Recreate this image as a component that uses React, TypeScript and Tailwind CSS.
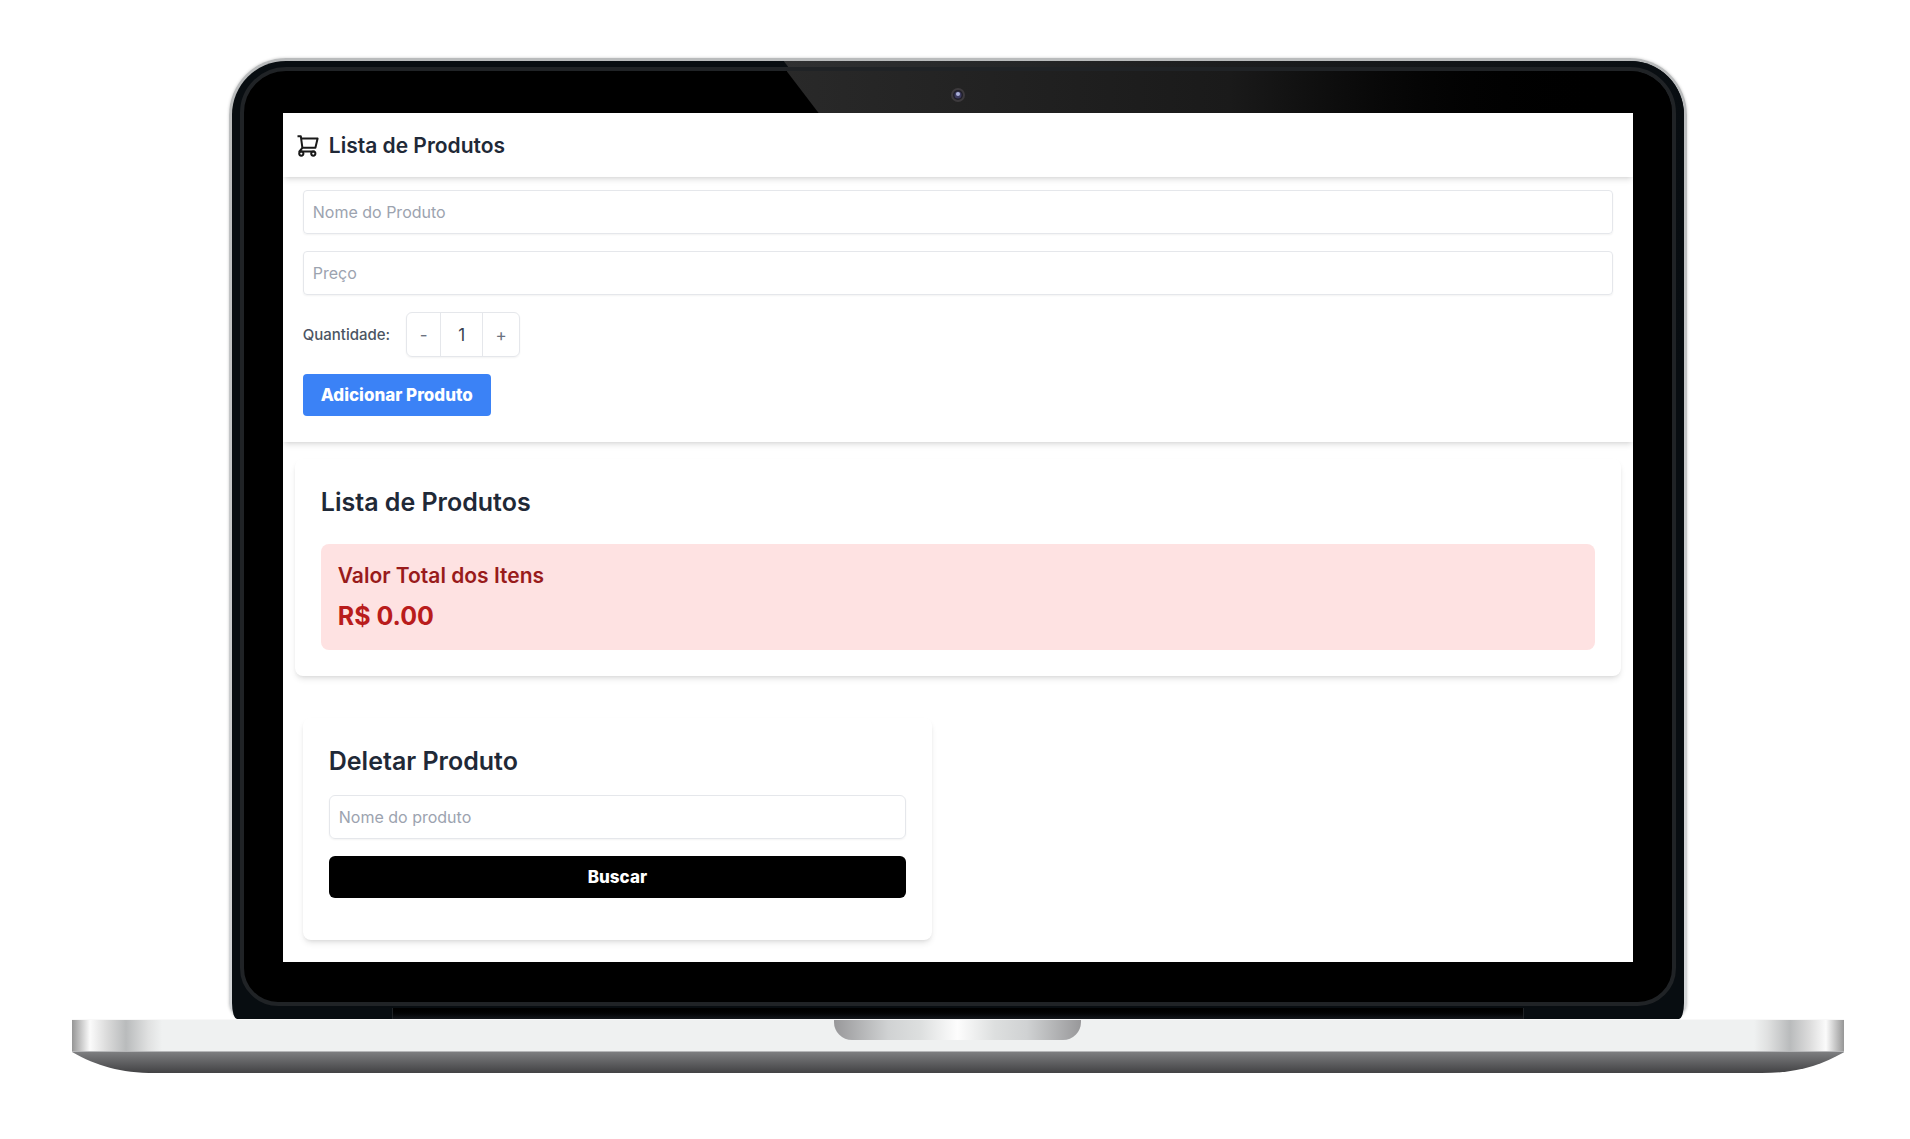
import { useState } from 'react';

interface SearchCardProps {
  title: string;
  placeholder: string;
}

function CartIcon() {
  return (
    <svg
      width="22"
      height="22"
      viewBox="0 0 22 22"
      fill="none"
      stroke="#1a1a1a"
      strokeWidth="2"
      strokeLinejoin="round"
      aria-hidden="true"
    >
      <path d="M0.5 1.2h3.3L5.4 12.8h13L20.6 3.4H4.2" />
      <path d="M5.4 12.8 2.4 16.4h15.4" />
      <circle cx="4.3" cy="18.6" r="2.1" />
      <circle cx="16.3" cy="18.6" r="2.1" />
    </svg>
  );
}

function SearchCard({ title, placeholder }: SearchCardProps) {
  return (
    <section className="ml-5 mt-[42px] w-[46.6%] rounded-lg bg-white p-[26px] pb-[42px] shadow-md">
      <h2 className="mb-[17px] text-[25px] font-semibold leading-[34px] text-[#1f2937]">{title}</h2>
      <input
        type="text"
        aria-label={placeholder}
        placeholder={placeholder}
        className="mb-[17px] block h-[44px] w-full rounded-md border border-gray-200 px-[9px] text-base shadow-xs placeholder:text-[#9ca3af]"
      />
      <button className="block h-[42px] w-full rounded-md bg-black text-[17px] font-extrabold text-white">
        Buscar
      </button>
    </section>
  );
}

function ProductApp() {
  const [quantity, setQuantity] = useState(1);

  return (
    <div className="bg-white pb-[22px] text-[17px] leading-[26px]">
      {/* Header */}
      <header className="flex h-[64px] items-center gap-[10px] px-[14px] pt-[2px] shadow-md">
        <CartIcon />
        <h1 className="text-[21px] font-semibold text-[#1f2937]">Lista de Produtos</h1>
      </header>

      {/* Product form */}
      <form className="px-5 pb-[26px] pt-[13px] shadow-md" onSubmit={(e) => e.preventDefault()}>
        <input
          type="text"
          aria-label="Nome do Produto"
          placeholder="Nome do Produto"
          className="mb-[17px] block h-[44px] w-full rounded-sm border border-gray-200 px-[9px] text-base shadow-xs placeholder:text-[#9ca3af]"
        />
        <input
          type="text"
          aria-label="Preço"
          placeholder="Preço"
          className="mb-[17px] block h-[44px] w-full rounded-sm border border-gray-200 px-[9px] text-base shadow-xs placeholder:text-[#9ca3af]"
        />
        <div className="mb-[17px] flex items-center gap-4">
          <label htmlFor="quantity" className="text-[15px] font-medium text-[#4b5563]">
            Quantidade:
          </label>
          <div className="flex h-[45px] rounded-md border border-gray-200 shadow-xs">
            <button
              type="button"
              aria-label="Diminuir"
              onClick={() => setQuantity(Math.max(1, quantity - 1))}
              className="w-[33px] text-[#6b7280]"
            >
              -
            </button>
            <input
              id="quantity"
              type="text"
              value={quantity}
              onChange={(e) => setQuantity(Number(e.target.value) || 1)}
              className="w-[43px] border-x border-gray-200 text-center text-[#374151]"
            />
            <button
              type="button"
              aria-label="Aumentar"
              onClick={() => setQuantity(quantity + 1)}
              className="w-[36px] text-[#6b7280]"
            >
              +
            </button>
          </div>
        </div>
        <button type="submit" className="block h-[42px] rounded-sm bg-[#3b82f6] px-[18px] font-extrabold text-white">
          Adicionar Produto
        </button>
      </form>

      {/* Product list */}
      <section className="mx-3 mt-[17px] rounded-lg bg-white p-[26px] shadow-md">
        <h2 className="mb-[25px] text-[25px] font-semibold leading-[34px] text-[#1f2937]">Lista de Produtos</h2>
        <div className="rounded-lg bg-[#fee2e2] p-[17px]">
          <h3 className="mb-2 text-[21px] font-semibold leading-[30px] text-[#991b1b]">Valor Total dos Itens</h3>
          <p className="text-[25px] font-bold leading-[34px] text-[#b91c1c]">R$ 0.00</p>
        </div>
      </section>

      <SearchCard title="Deletar Produto" placeholder="Nome do produto" />
    </div>
  );
}

function Camera() {
  return (
    <svg
      width="16"
      height="16"
      viewBox="0 0 16 16"
      className="absolute left-1/2 top-[26px] -translate-x-1/2"
      aria-hidden="true"
    >
      <circle cx="8" cy="8" r="7" fill="#3d3a3d" />
      <circle cx="8" cy="8" r="5" fill="#201f29" />
      <circle cx="8" cy="8" r="3.5" fill="#3d3b60" />
      <circle cx="8" cy="7" r="2" fill="#aab0d8" />
    </svg>
  );
}

export default function App() {
  return (
    <main className="flex min-h-screen flex-col items-center bg-white pb-16 pl-[6px] pt-[58px] font-['Inter',sans-serif]">
      {/* Lid */}
      <div className="w-[76.6%] rounded-b-[16px] rounded-t-[57px] bg-linear-to-b from-[#b9bbbc] to-[#d5d7d9] px-[3px] pt-[3px] shadow-[0_0_3px_#c8c8c8]">
        <div className="relative overflow-hidden rounded-t-[54px] bg-[#080d11] px-[8px] pb-[13px] pt-[6px] [border-bottom-left-radius:5px_16px] [border-bottom-right-radius:5px_16px]">
          <div className="absolute left-[38%] right-0 top-0 h-[300px] bg-linear-to-r from-[#303132] via-[#1c1d1e] via-50% to-[#080d11] [clip-path:polygon(0_0,100%_0,100%_100%,229px_100%)]" />
          <div className="absolute bottom-0 left-[11%] right-[11%] h-[11px] border-x border-[#202326] bg-linear-to-b from-black to-[#16191d]" />
          <div className="relative overflow-hidden rounded-b-[38px] rounded-t-[46px] border-4 border-[#202326] bg-black px-[39px] pb-[40px] pt-[42px]">
            <div className="absolute left-[38%] right-0 top-0 h-[300px] bg-linear-to-r from-[#292929] via-[#1a1a1a] via-50% to-black to-95% [clip-path:polygon(0_0,100%_0,100%_100%,229px_100%)]" />
            <div className="relative">
              <ProductApp />
            </div>
          </div>
          <Camera />
        </div>
      </div>

      {/* Base */}
      <div className="w-[93.1%]">
        <div className="flex h-[33px] justify-between border-b border-t border-b-[#b5b6b8] border-t-[#f8f8f8] bg-[#eff1f1]">
          <div className="w-[90px] bg-[linear-gradient(to_right,#969696,#fbfbfb_20%,#dcdcdc_38%,#b9bbbc_60%,#e0e1e1_85%,#eff1f1)]" />
          <div className="h-[20px] w-[247px] rounded-b-[18px] bg-[linear-gradient(to_right,#98989a,#d0d2d3_22%,#dddfdf_35%,#fdfdfd_50%,#dddfdf_65%,#d0d2d3_78%,#98989a)]" />
          <div className="w-[90px] bg-[linear-gradient(to_left,#969696,#fbfbfb_20%,#dcdcdc_38%,#b9bbbc_60%,#e0e1e1_85%,#eff1f1)]" />
        </div>
        <svg className="block h-[21px] w-full" viewBox="0 0 1773 21" preserveAspectRatio="none" aria-hidden="true">
          <defs>
            <linearGradient id="underside" x1="0" y1="0" x2="0" y2="1">
              <stop offset="0" stopColor="#7d7e80" />
              <stop offset="1" stopColor="#424244" />
            </linearGradient>
          </defs>
          <path d="M0 0H1773C1748 14 1725 21 1690 21H83C48 21 25 14 0 0Z" fill="url(#underside)" />
        </svg>
      </div>
    </main>
  );
}
